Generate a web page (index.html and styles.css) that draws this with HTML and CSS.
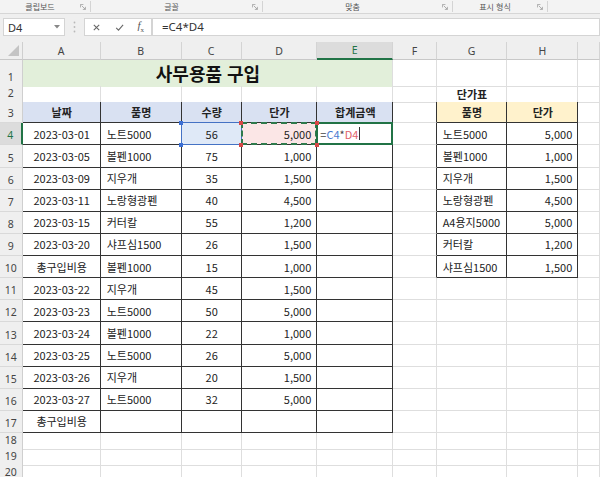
FILE: index.html
```html
<!DOCTYPE html>
<html lang="ko">
<head>
    <meta charset="UTF-8">
    <title>사무용품 구입 - Excel</title>
    <link rel="stylesheet" href="styles.css">
</head>
<body>
    <!-- ribbon group labels -->
    <div class="ribbon">
        <div class="group g-clip"><span class="label">클립보드</span><svg class="launcher" viewBox="0 0 7 7"><path d="M0.5 4V0.5H4M2 2l4.3 4.3M6.3 3.3v3h-3"/></svg></div>
        <div class="group g-font"><span class="label">글꼴</span><svg class="launcher" viewBox="0 0 7 7"><path d="M0.5 4V0.5H4M2 2l4.3 4.3M6.3 3.3v3h-3"/></svg></div>
        <div class="group g-align"><span class="label">맞춤</span><svg class="launcher" viewBox="0 0 7 7"><path d="M0.5 4V0.5H4M2 2l4.3 4.3M6.3 3.3v3h-3"/></svg></div>
        <div class="group g-num"><span class="label">표시 형식</span><svg class="launcher" viewBox="0 0 7 7"><path d="M0.5 4V0.5H4M2 2l4.3 4.3M6.3 3.3v3h-3"/></svg></div>
        <div class="group g-rest"></div>
    </div>

    <!-- formula bar -->
    <div class="fbar">
        <div class="namebox">
            <span>D4</span>
            <svg class="drop" viewBox="0 0 6 4"><path d="M0 0h6L3 3.5z"/></svg>
        </div>
        <div class="grip">
            <svg viewBox="0 0 3 12"><circle cx="1.5" cy="1.5" r="0.9"/><circle cx="1.5" cy="6" r="0.9"/><circle cx="1.5" cy="10.5" r="0.9"/></svg>
        </div>
        <div class="fxbox">
            <svg class="ico" viewBox="0 0 10 10"><path d="M2 2l6 6M8 2l-6 6"/></svg>
            <svg class="ico" viewBox="0 0 10 10"><path d="M1.3 5.3l2.6 2.6L9 2"/></svg>
            <span class="fx"><i>f</i><sub>x</sub></span>
        </div>
        <div class="formula">=C4*D4</div>
    </div>

    <!-- sheet -->
    <div class="sheet">
        <div class="row row-cols">
            <div class="corner"><span class="tri"></span></div>
            <div class="ch">A</div>
            <div class="ch">B</div>
            <div class="ch">C</div>
            <div class="ch">D</div>
            <div class="ch sel">E</div>
            <div class="ch">F</div>
            <div class="ch">G</div>
            <div class="ch">H</div>
            <div class="ch"></div>
        </div>

        <div class="row row-title">
            <div class="rh">1</div>
            <div class="c title">사무용품 구입</div>
            <div class="c"></div>
            <div class="c"></div>
            <div class="c"></div>
            <div class="c"></div>
        </div>

        <div class="row row-short">
            <div class="rh">2</div>
            <div class="c top"></div>
            <div class="c top"></div>
            <div class="c top"></div>
            <div class="c top"></div>
            <div class="c top"></div>
            <div class="c"></div>
            <div class="c ctr top bold">단가표</div>
            <div class="c top"></div>
            <div class="c"></div>
        </div>

        <div class="row row-head">
            <div class="rh">3</div>
            <div class="c ctr bx th">날짜</div>
            <div class="c ctr bx th">품명</div>
            <div class="c ctr bx th">수량</div>
            <div class="c ctr bx th">단가</div>
            <div class="c ctr bx th">합계금액</div>
            <div class="c lft"></div>
            <div class="c ctr bx th2">품명</div>
            <div class="c ctr bx th2">단가</div>
            <div class="c"></div>
        </div>

        <div class="row row-data">
            <div class="rh sel">4</div>
            <div class="c ctr bx">2023-03-01</div>
            <div class="c bx">노트5000</div>
            <div class="c ctr bx ref-c">56<i class="h tl"></i><i class="h tr"></i><i class="h bl"></i><i class="h br"></i></div>
            <div class="c num bx ref-d">5,000<i class="h tl"></i><i class="h tr"></i><i class="h bl"></i><i class="h br"></i></div>
            <div class="c bx active"><span class="op">=</span><span class="rc">C4</span><span class="op">*</span><span class="rdr">D4</span><span class="caret"></span></div>
            <div class="c lft"></div>
            <div class="c bx">노트5000</div>
            <div class="c num bx">5,000</div>
            <div class="c"></div>
        </div>

        <div class="row row-data">
            <div class="rh">5</div>
            <div class="c ctr bx">2023-03-05</div>
            <div class="c bx">볼펜1000</div>
            <div class="c ctr bx">75</div>
            <div class="c num bx">1,000</div>
            <div class="c bx"></div>
            <div class="c lft"></div>
            <div class="c bx">볼펜1000</div>
            <div class="c num bx">1,000</div>
            <div class="c"></div>
        </div>

        <div class="row row-data">
            <div class="rh">6</div>
            <div class="c ctr bx">2023-03-09</div>
            <div class="c bx">지우개</div>
            <div class="c ctr bx">35</div>
            <div class="c num bx">1,500</div>
            <div class="c bx"></div>
            <div class="c lft"></div>
            <div class="c bx">지우개</div>
            <div class="c num bx">1,500</div>
            <div class="c"></div>
        </div>

        <div class="row row-data">
            <div class="rh">7</div>
            <div class="c ctr bx">2023-03-11</div>
            <div class="c bx">노랑형광펜</div>
            <div class="c ctr bx">40</div>
            <div class="c num bx">4,500</div>
            <div class="c bx"></div>
            <div class="c lft"></div>
            <div class="c bx">노랑형광펜</div>
            <div class="c num bx">4,500</div>
            <div class="c"></div>
        </div>

        <div class="row row-data">
            <div class="rh">8</div>
            <div class="c ctr bx">2023-03-15</div>
            <div class="c bx">커터칼</div>
            <div class="c ctr bx">55</div>
            <div class="c num bx">1,200</div>
            <div class="c bx"></div>
            <div class="c lft"></div>
            <div class="c bx">A4용지5000</div>
            <div class="c num bx">5,000</div>
            <div class="c"></div>
        </div>

        <div class="row row-data">
            <div class="rh">9</div>
            <div class="c ctr bx">2023-03-20</div>
            <div class="c bx">샤프심1500</div>
            <div class="c ctr bx">26</div>
            <div class="c num bx">1,500</div>
            <div class="c bx"></div>
            <div class="c lft"></div>
            <div class="c bx">커터칼</div>
            <div class="c num bx">1,200</div>
            <div class="c"></div>
        </div>

        <div class="row row-data">
            <div class="rh">10</div>
            <div class="c ctr bx">총구입비용</div>
            <div class="c bx">볼펜1000</div>
            <div class="c ctr bx">15</div>
            <div class="c num bx">1,000</div>
            <div class="c bx"></div>
            <div class="c lft"></div>
            <div class="c bx">샤프심1500</div>
            <div class="c num bx">1,500</div>
            <div class="c"></div>
        </div>

        <div class="row row-data">
            <div class="rh">11</div>
            <div class="c ctr bx">2023-03-22</div>
            <div class="c bx">지우개</div>
            <div class="c ctr bx">45</div>
            <div class="c num bx">1,500</div>
            <div class="c bx"></div>
            <div class="c"></div><div class="c"></div><div class="c"></div><div class="c"></div>
        </div>

        <div class="row row-data">
            <div class="rh">12</div>
            <div class="c ctr bx">2023-03-23</div>
            <div class="c bx">노트5000</div>
            <div class="c ctr bx">50</div>
            <div class="c num bx">5,000</div>
            <div class="c bx"></div>
            <div class="c"></div><div class="c"></div><div class="c"></div><div class="c"></div>
        </div>

        <div class="row row-data">
            <div class="rh">13</div>
            <div class="c ctr bx">2023-03-24</div>
            <div class="c bx">볼펜1000</div>
            <div class="c ctr bx">22</div>
            <div class="c num bx">1,000</div>
            <div class="c bx"></div>
            <div class="c"></div><div class="c"></div><div class="c"></div><div class="c"></div>
        </div>

        <div class="row row-data">
            <div class="rh">14</div>
            <div class="c ctr bx">2023-03-25</div>
            <div class="c bx">노트5000</div>
            <div class="c ctr bx">26</div>
            <div class="c num bx">5,000</div>
            <div class="c bx"></div>
            <div class="c"></div><div class="c"></div><div class="c"></div><div class="c"></div>
        </div>

        <div class="row row-data">
            <div class="rh">15</div>
            <div class="c ctr bx">2023-03-26</div>
            <div class="c bx">지우개</div>
            <div class="c ctr bx">20</div>
            <div class="c num bx">1,500</div>
            <div class="c bx"></div>
            <div class="c"></div><div class="c"></div><div class="c"></div><div class="c"></div>
        </div>

        <div class="row row-data">
            <div class="rh">16</div>
            <div class="c ctr bx">2023-03-27</div>
            <div class="c bx">노트5000</div>
            <div class="c ctr bx">32</div>
            <div class="c num bx">5,000</div>
            <div class="c bx"></div>
            <div class="c"></div><div class="c"></div><div class="c"></div><div class="c"></div>
        </div>

        <div class="row row-data">
            <div class="rh">17</div>
            <div class="c ctr bx">총구입비용</div>
            <div class="c bx"></div>
            <div class="c bx"></div>
            <div class="c bx"></div>
            <div class="c bx"></div>
            <div class="c"></div><div class="c"></div><div class="c"></div><div class="c"></div>
        </div>

        <div class="row row-short">
            <div class="rh">18</div>
            <div class="c"></div><div class="c"></div><div class="c"></div><div class="c"></div><div class="c"></div>
            <div class="c"></div><div class="c"></div><div class="c"></div><div class="c"></div>
        </div>

        <div class="row row-short">
            <div class="rh">19</div>
            <div class="c"></div><div class="c"></div><div class="c"></div><div class="c"></div><div class="c"></div>
            <div class="c"></div><div class="c"></div><div class="c"></div><div class="c"></div>
        </div>

        <div class="row row-short">
            <div class="rh">20</div>
            <div class="c"></div><div class="c"></div><div class="c"></div><div class="c"></div><div class="c"></div>
            <div class="c"></div><div class="c"></div><div class="c"></div><div class="c"></div>
        </div>
    </div>
</body>
</html>
```

FILE: styles.css
```css
* {
    box-sizing: border-box;
}

body {
    margin: 0;
    width: 600px;
    height: 477px;
    overflow: hidden;
    background: #fff;
    font-family: "Noto Sans", "Noto Sans CJK KR", sans-serif;
    color: #222;
}

/* ribbon */
.ribbon {
    display: flex;
    height: 14px;
    background: #f3f3f3;
    border-bottom: 1px solid #d6d6d6;
}

.group {
    display: flex;
    align-items: center;
    height: 11px;
    margin-top: 1px;
    border-right: 1px solid #d4d4d4;
}

.g-clip { width: 91px; }
.g-font { width: 172px; }
.g-align { width: 190px; }
.g-num { width: 95px; }
.g-rest { flex: 1; border-right: none; }

.label {
    flex: 1;
    text-align: center;
    font-family: "Noto Sans CJK KR", sans-serif;
    font-size: 8px;
    color: #555;
}

.launcher {
    width: 6px;
    height: 6px;
    margin-right: 4px;
    fill: none;
    stroke: #999;
    stroke-width: 0.9;
}

/* formula bar */
.fbar {
    display: flex;
    align-items: center;
    height: 28px;
    padding: 4px 0 6px 3px;
    background: #efefef;
}

.namebox {
    display: flex;
    align-items: center;
    justify-content: space-between;
    width: 62px;
    height: 18px;
    padding: 0 4px 0 4px;
    background: #fff;
    border: 1px solid #d4d4d4;
    font-size: 11px;
    color: #333;
}

.drop {
    width: 6px;
    height: 4px;
    fill: #888;
}

.grip {
    display: flex;
    justify-content: center;
    width: 19px;
}

.grip svg {
    width: 3px;
    height: 12px;
    fill: #b8b8b8;
}

.fxbox {
    display: flex;
    align-items: center;
    justify-content: space-around;
    width: 68px;
    height: 18px;
    background: #fff;
    border: 1px solid #d4d4d4;
}

.ico {
    width: 9px;
    height: 9px;
    fill: none;
    stroke: #666;
    stroke-width: 1.2;
}

.fx {
    font-family: "Liberation Serif", serif;
    font-size: 11px;
    color: #555;
}

.fx sub {
    font-size: 7px;
}

.formula {
    flex: 1;
    height: 18px;
    padding-left: 9px;
    background: #fff;
    border: 1px solid #d4d4d4;
    font-size: 11.5px;
    line-height: 16px;
    color: #333;
}

/* sheet grid */
.row {
    display: grid;
    grid-template-columns: 22.7px 78px 81px 60px 75.6px 76px 43.4px 70.6px 71px 1fr;
}

.row-cols { height: 18px; }
.row-title { height: 26px; }
.row-short { height: 16px; }
.row-head { height: 21.3px; }
.row-data { height: 22.14px; }

.corner {
    display: flex;
    align-items: flex-end;
    justify-content: flex-end;
    padding: 0 3px 3px 0;
    background: #efefef;
    border-right: 1px solid #cfcfcf;
    border-bottom: 1px solid #c8c8c8;
}

.tri {
    width: 0;
    height: 0;
    border-left: 11px solid transparent;
    border-bottom: 11px solid #c4c4c4;
}

.ch {
    display: flex;
    align-items: center;
    justify-content: center;
    background: #efefef;
    border-right: 1px solid #d4d4d4;
    border-bottom: 1px solid #c8c8c8;
    font-size: 10.5px;
    color: #444;
}

.ch.sel {
    background: #dcdcdc;
    color: #217346;
    border-bottom: 2px solid #217346;
}

.rh {
    display: flex;
    align-items: flex-end;
    justify-content: center;
    padding-bottom: 1px;
    background: #efefef;
    border-right: 1px solid #cfcfcf;
    border-bottom: 1px solid #d9d9d9;
    font-size: 10.5px;
    line-height: 15px;
    color: #444;
}

.rh.sel {
    background: #dcdcdc;
    color: #217346;
    border-right: 2px solid #217346;
}

.c {
    position: relative;
    display: flex;
    align-items: center;
    padding: 0 5px 0 6px;
    border-right: 1px solid #dedede;
    border-bottom: 1px solid #dedede;
    font-family: "Noto Sans CJK KR", "Noto Sans", sans-serif;
    font-size: 11px;
    white-space: nowrap;
    color: #222;
}

.ctr { justify-content: center; }
.num { justify-content: flex-end; }
.bold { font-weight: bold; }

.title {
    grid-column: span 5;
    justify-content: center;
    background: #e2efda;
    border-bottom-color: transparent;
    font-size: 18px;
    font-weight: bold;
    color: #111;
}

.th {
    background: #d9e1f2;
    font-weight: bold;
}

.th2 {
    background: #fff2cc;
    font-weight: bold;
}

/* table borders */
.bx {
    border-right-color: #333;
    border-bottom-color: #333;
}

.top { border-bottom-color: #333; }
.lft { border-right-color: #333; }

/* formula reference highlights */
.ref-c { background: #dfe9f7; }
.ref-d { background: #fbe6e6; }

.ref-c::after,
.ref-d::after,
.active::after {
    content: "";
    position: absolute;
    inset: -1px;
    z-index: 2;
}

.ref-c::after { border: 1px solid #4472c4; }
.ref-d::after { border: 2px dashed #2e7a4c; }
.active::after { border: 2px solid #217346; }

.h {
    position: absolute;
    width: 4px;
    height: 4px;
    z-index: 3;
}

.h.tl { top: -2.5px; left: -2.5px; }
.h.tr { top: -2.5px; right: -2.5px; }
.h.bl { bottom: -2.5px; left: -2.5px; }
.h.br { bottom: -2.5px; right: -2.5px; }

.ref-c .h { background: #3b6fd4; }
.ref-d .h { background: #d84848; }

.active {
    padding-left: 3px;
}

.op { color: #444; }
.rc { color: #4a7bd0; }
.rdr { color: #e0606a; }

.caret {
    display: inline-block;
    width: 1px;
    height: 13px;
    margin-left: 1px;
    background: #333;
}
```
